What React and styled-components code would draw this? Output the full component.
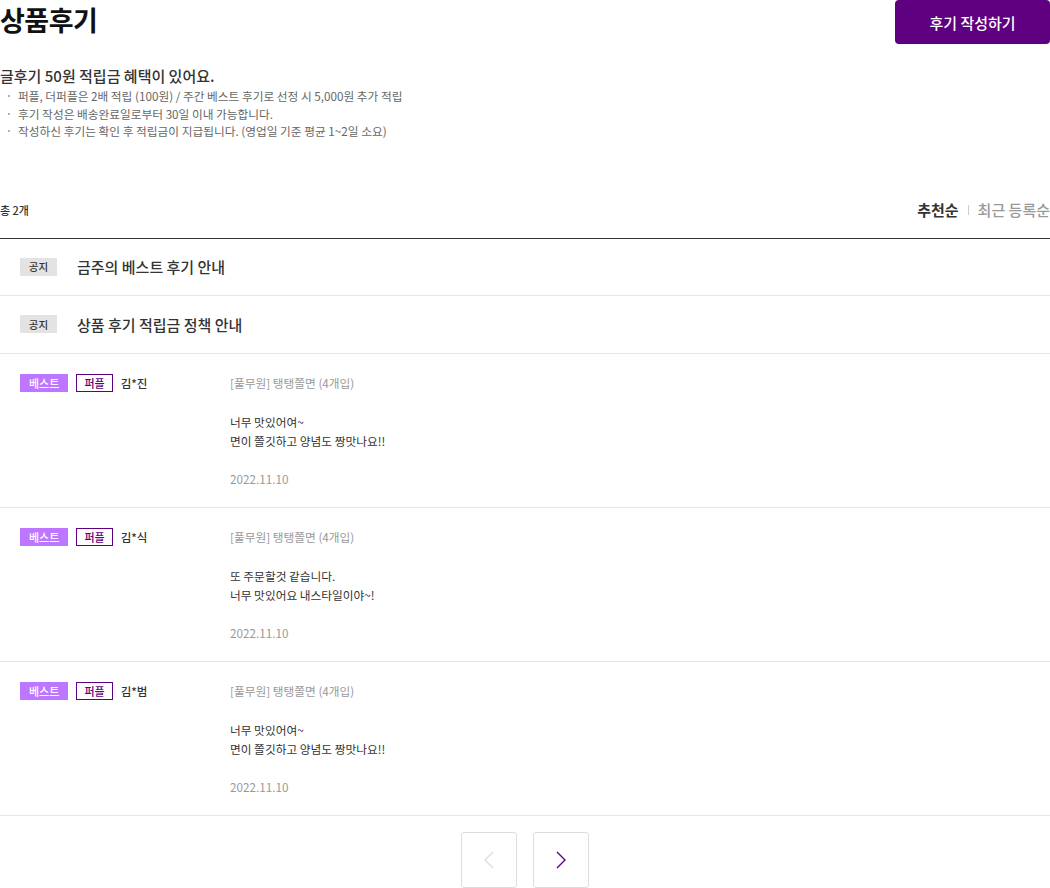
import React from 'react'
import styled, { createGlobalStyle } from 'styled-components'

const GlobalStyle = createGlobalStyle`
  body {
    margin: 0;
    font-family: "Noto Sans CJK KR", "Noto Sans", sans-serif;
    color: #333;
    background: #fff;
  }
  * { box-sizing: border-box; }
`

const Page = styled.div`
  width: 1050px;
`

const Header = styled.div`
  display: flex;
  justify-content: space-between;
  align-items: flex-start;
`

const Title = styled.h2`
  margin: 0;
  font-size: 27px;
  line-height: 40px;
  font-weight: 700;
  color: #111;
  letter-spacing: -0.5px;
`

const WriteButton = styled.button`
  width: 155px;
  height: 44px;
  border: 0;
  border-radius: 4px;
  background: #5f0080;
  color: #fff;
  font-family: inherit;
  font-size: 15px;
  font-weight: 500;
  cursor: pointer;
`

const Info = styled.div`
  margin-top: 22px;
`

const InfoTitle = styled.p`
  margin: 0;
  font-size: 15px;
  line-height: 20px;
  font-weight: 500;
  color: #333;
`

const InfoList = styled.ul`
  list-style: none;
  margin: 1px 0 0;
  padding: 0;
`

const InfoItem = styled.li`
  position: relative;
  padding-left: 18px;
  font-size: 11.7px;
  line-height: 17.5px;
  color: #666;

  &::before {
    content: '';
    position: absolute;
    left: 8px;
    top: 8px;
    width: 2px;
    height: 2px;
    border-radius: 50%;
    background: #999;
  }
`

const ListBar = styled.div`
  display: flex;
  justify-content: space-between;
  align-items: center;
  margin-top: 58px;
  height: 40px;
  padding-bottom: 16px;
`

const Count = styled.span`
  font-size: 11px;
  font-weight: 500;
  color: #333;
`

const Sort = styled.div`
  display: flex;
  align-items: center;
`

const SortButton = styled.button`
  border: 0;
  background: none;
  padding: 0;
  font-family: inherit;
  font-size: 15px;
  font-weight: ${p => (p.$active ? 700 : 500)};
  color: ${p => (p.$active ? '#333' : '#999')};
`

const SortDivider = styled.span`
  width: 1px;
  height: 10px;
  margin: 0 9px;
  background: #ccc;
`

const Board = styled.div`
  border-top: 1px solid #333;
`

const NoticeRow = styled.div`
  display: flex;
  align-items: center;
  height: ${p => (p.$last ? 58 : 57)}px;
  padding: 0 20px;
  border-bottom: 1px solid #e5e5e5;
`

const NoticeBadge = styled.span`
  display: inline-flex;
  align-items: center;
  justify-content: center;
  width: 37px;
  height: 18px;
  margin-right: 20px;
  background: #e3e3e3;
  font-size: 10.5px;
  color: #333;
  font-weight: 500;
`

const NoticeTitle = styled.span`
  font-size: 15px;
  font-weight: 500;
  color: #333;
`

const ReviewRow = styled.div`
  display: flex;
  padding: 20px 20px 19px;
  border-bottom: 1px solid #e5e5e5;
`

const Profile = styled.div`
  display: flex;
  align-items: flex-start;
  width: 210px;
  flex-shrink: 0;
`

const Badge = styled.span`
  display: inline-flex;
  align-items: center;
  justify-content: center;
  height: 18px;
  padding: 0 ${p => (p.$outline ? 7 : 9)}px;
  margin-right: 8px;
  font-size: 11px;
  font-weight: 500;
  background: ${p => (p.$outline ? '#fff' : '#bd76ff')};
  color: ${p => (p.$outline ? '#5f0080' : '#fff')};
  border: ${p => (p.$outline ? '1px solid #5f0080' : '0')};
`

const Name = styled.span`
  font-size: 11.5px;
  line-height: 18px;
  font-weight: 500;
  color: #333;
`

const ReviewBody = styled.div`
  flex: 1;
`

const Product = styled.p`
  margin: 0;
  font-size: 11.7px;
  line-height: 18px;
  color: #999;
`

const Content = styled.p`
  margin: 20px 0 0;
  font-size: 11.7px;
  line-height: 19px;
  color: #333;
  white-space: pre-line;
`

const DateText = styled.p`
  margin: 19px 0 0;
  font-size: 11.7px;
  line-height: 19px;
  color: #999;
`

const Pagination = styled.div`
  display: flex;
  justify-content: center;
  gap: 16px;
  padding-top: 16px;
`

const PageButton = styled.button`
  display: flex;
  align-items: center;
  justify-content: center;
  width: 56px;
  height: 56px;
  padding: 0;
  border: 1px solid #ddd;
  border-radius: 3px;
  background: #fff;
  color: ${p => (p.disabled ? '#ddd' : '#5f0080')};
`

const Chevron = ({ dir }) => (
  <svg width="12" height="20" viewBox="0 0 12 20" fill="none">
    <path
      d={dir === 'left' ? 'M10 2 L2 10 L10 18' : 'M2 2 L10 10 L2 18'}
      stroke="currentColor"
      strokeWidth="1.4"
    />
  </svg>
)

const notices = ['금주의 베스트 후기 안내', '상품 후기 적립금 정책 안내']

const reviews = [
  { name: '김*진', text: '너무 맛있어여~\n면이 쫄깃하고 양념도 짱맛나요!!' },
  { name: '김*식', text: '또 주문할것 같습니다.\n너무 맛있어요 내스타일이야~!' },
  { name: '김*범', text: '너무 맛있어여~\n면이 쫄깃하고 양념도 짱맛나요!!' },
]

export default function App() {
  return (
    <Page>
      <GlobalStyle />
      <Header>
        <Title>상품후기</Title>
        <WriteButton>후기 작성하기</WriteButton>
      </Header>

      <Info>
        <InfoTitle>글후기 50원 적립금 혜택이 있어요.</InfoTitle>
        <InfoList>
          <InfoItem>퍼플, 더퍼플은 2배 적립 (100원) / 주간 베스트 후기로 선정 시 5,000원 추가 적립</InfoItem>
          <InfoItem>후기 작성은 배송완료일로부터 30일 이내 가능합니다.</InfoItem>
          <InfoItem>작성하신 후기는 확인 후 적립금이 지급됩니다. (영업일 기준 평균 1~2일 소요)</InfoItem>
        </InfoList>
      </Info>

      <ListBar>
        <Count>총 2개</Count>
        <Sort>
          <SortButton $active>추천순</SortButton>
          <SortDivider />
          <SortButton>최근 등록순</SortButton>
        </Sort>
      </ListBar>

      <Board>
        {notices.map((n, i) => (
          <NoticeRow key={n} $last={i === notices.length - 1}>
            <NoticeBadge>공지</NoticeBadge>
            <NoticeTitle>{n}</NoticeTitle>
          </NoticeRow>
        ))}
        {reviews.map(r => (
          <ReviewRow key={r.name}>
            <Profile>
              <Badge>베스트</Badge>
              <Badge $outline>퍼플</Badge>
              <Name>{r.name}</Name>
            </Profile>
            <ReviewBody>
              <Product>[풀무원] 탱탱쫄면 (4개입)</Product>
              <Content>{r.text}</Content>
              <DateText>2022.11.10</DateText>
            </ReviewBody>
          </ReviewRow>
        ))}
      </Board>

      <Pagination>
        <PageButton disabled>
          <Chevron dir="left" />
        </PageButton>
        <PageButton>
          <Chevron dir="right" />
        </PageButton>
      </Pagination>
    </Page>
  )
}
